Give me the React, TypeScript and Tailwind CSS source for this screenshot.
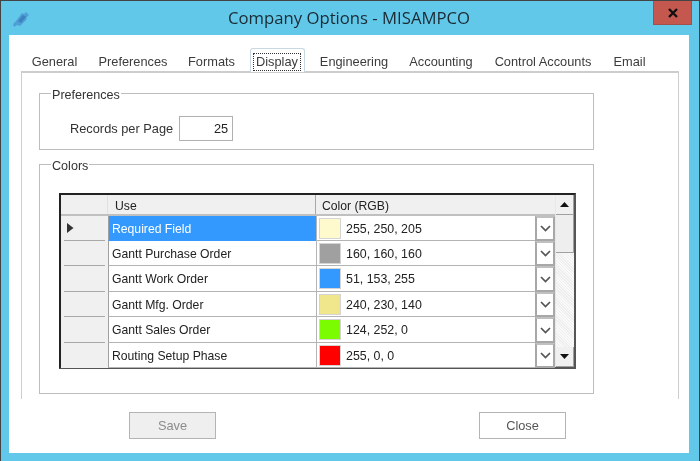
import React from "react";

const rows = [
  { use: "Required Field", rgb: "255, 250, 205", color: "bg-[#fffacd]", h: "h-[25px]" },
  { use: "Gantt Purchase Order", rgb: "160, 160, 160", color: "bg-[#a0a0a0]", h: "h-[25px]" },
  { use: "Gantt Work Order", rgb: "51, 153, 255", color: "bg-[#3399ff]", h: "h-[26px]" },
  { use: "Gantt Mfg. Order", rgb: "240, 230, 140", color: "bg-[#f0e68c]", h: "h-[25px]" },
  { use: "Gantt Sales Order", rgb: "124, 252, 0", color: "bg-[#7cfc00]", h: "h-[26px]" },
  { use: "Routing Setup Phase", rgb: "255, 0, 0", color: "bg-[#ff0000]", h: "h-[25px]" },
];

const tabs = [
  { label: "General", w: "w-[67px]" },
  { label: "Preferences", w: "w-[90px]" },
  { label: "Formats", w: "w-[67px]" },
  { label: "Display", w: "w-[64px]", active: true },
  { label: "Engineering", w: "w-[90px]" },
  { label: "Accounting", w: "w-[84px]" },
  { label: "Control Accounts", w: "w-[120px]" },
  { label: "Email", w: "w-[53px]" },
];

function Chevron() {
  return (
    <svg width="11" height="7" viewBox="0 0 11 7" fill="none">
      <path d="M1 1 L5.5 5.5 L10 1" stroke="#555" strokeWidth="1.7" />
    </svg>
  );
}

export default function App() {
  return (
    <div className="w-[700px] h-[461px] overflow-hidden bg-[#62c8ea] border-t border-x border-[#444] font-['Liberation_Sans',sans-serif] text-[12.8px] text-[#3c3c3c] blur-[0.35px]">
      {/* Title bar */}
      <div className="h-[34px] grid grid-cols-[1fr_auto_1fr]">
        <div className="pl-[11px] pt-[9px]">
          <svg width="18" height="18" viewBox="0 0 18 18" className="blur-[0.6px]">
            <path d="M4 11 L10 3 L12 4 L14 2 L17 5 L14 8 L15 9 L8 16 L5 15 L2 17 L1 14 Z" fill="#4f9fd6" />
            <path d="M6 11 L11 5 L14 7 L9 13 Z" fill="#3b82bf" />
          </svg>
        </div>
        <div className="font-['Open_Sans',sans-serif] text-[16.7px] leading-[34px] text-[#1a2a33] pr-[2px]">
          Company Options - MISAMPCO
        </div>
        <div className="flex justify-end pr-[7px]">
          <div className="w-[39px] h-[25px] -mt-px bg-[#c4574e] border border-[#a2514a] flex items-center justify-center">
            <svg width="12" height="10" viewBox="0 0 12 10">
              <path d="M2 1 L10 9 M10 1 L2 9" stroke="#111" strokeWidth="2.4" />
            </svg>
          </div>
        </div>
      </div>

      {/* Client area */}
      <div className="ml-[8px] w-[680px] h-[418px] bg-white pt-[13px]">
        {/* Tabs */}
        <div className="ml-[12px] h-[23px] flex items-end relative">
          {tabs.map((t) => (
            <div key={t.label} className={`${t.w} flex justify-center`}>
              {t.active ? (
                <div className="w-[55px] h-[24px] -mb-px border border-b-0 border-[#c8d8e0] rounded-t-[3px] bg-white flex items-end justify-center relative z-10">
                  <span className="border border-dotted border-[#333] leading-[16px] px-[2px] mb-px text-[#3c3c3c]">{t.label}</span>
                </div>
              ) : (
                <span className="leading-[18px] whitespace-nowrap">{t.label}</span>
              )}
            </div>
          ))}
        </div>

        {/* Tab panel */}
        <div className="ml-[12px] w-[658px] h-[328px] border-t-2 border-x border-[#cdcdcd] pl-[17px] pt-[12px]">
          <fieldset className="w-[555px] h-[65px] border border-[#bdbdbd] pl-[11px]">
            <legend className="px-[1px] pt-[2px] leading-[14px] text-[12.6px] text-[#333] translate-y-px">Preferences</legend>
            <div className="mt-[15px] ml-[19px] flex items-center gap-[6px]">
              <span className="leading-[24px] text-[#333]">Records per Page</span>
              <div className="w-[54px] h-[25px] border border-[#b0b0b0] text-right pr-[4px] leading-[24px] text-[#222]">25</div>
            </div>
          </fieldset>

          <fieldset className="mt-[6px] w-[555px] h-[238px] border border-[#bdbdbd] pl-[11px]">
            <legend className="px-[1px] pt-[2px] leading-[14px] text-[12.6px] text-[#333] translate-y-px">Colors</legend>
            <div className="mt-[21px] ml-[8px] w-[517px] h-[176px] border-2 border-t-2 border-[#222] border-r-[#555] border-b-[#555] flex text-[12.2px] text-[#222]">
              <div className="w-[496px] flex flex-col">
                {/* Header */}
                <div className="h-[21px] shrink-0 flex bg-[#f0f0f0] border-b-2 border-[#c0c0c0]">
                  <div className="w-[47px] border-r border-[#e0e0e0]" />
                  <div className="w-[208px] pl-[7px] leading-[22px] border-r border-[#a8a8a8]">Use</div>
                  <div className="flex-1 pl-[6px] leading-[22px]">Color (RGB)</div>
                </div>
                {/* Rows */}
                {rows.map((r, i) => (
                  <div key={r.use} className={`${r.h} shrink-0 flex`}>
                    <div className="w-[47px] bg-[#f0f0f0] flex flex-col">
                      <div className="flex-1 flex items-center pl-[6px]">
                        {i === 0 && (
                          <svg width="7" height="10" viewBox="0 0 7 10">
                            <path d="M0 0 L6.5 5 L0 10 Z" fill="#333" />
                          </svg>
                        )}
                      </div>
                      {i < rows.length - 1 && <div className="mx-[3px] h-px bg-[#a8a8a8]" />}
                    </div>
                    <div
                      className={`w-[208px] pl-[3px] pt-[2px] flex items-center border-l border-[#a0a0a0] border-b whitespace-nowrap ${
                        i === 0 ? "bg-[#3399ff] text-white border-b-[#3399ff]" : "bg-white border-b-[#b4b4b4]"
                      }`}
                    >
                      {r.use}
                    </div>
                    <div className="flex-1 flex items-center border-l border-b border-[#b4b4b4] bg-white pl-[2px] text-[12.4px]">
                      <div className={`w-[22px] h-[21px] ${r.color} border border-[#d4d4d4]`} />
                      <span className="ml-[5px] pt-[2px]">{r.rgb}</span>
                    </div>
                    <div className="w-[20px] bg-white border-2 border-[#a8a8a8] border-t-[#c0c0c0] flex items-center justify-center">
                      <Chevron />
                    </div>
                  </div>
                ))}
              </div>
              {/* Scrollbar */}
              <div className="w-[19px] flex flex-col bg-[#f3f3f3] border-l border-[#e8e8e8]">
                <div className="h-[20px] shrink-0 bg-[#f0f0f0] border-b border-r border-[#a0a0a0] flex items-center justify-center">
                  <svg width="9" height="5" viewBox="0 0 9 5">
                    <path d="M0 5 L4.5 0 L9 5 Z" fill="#111" />
                  </svg>
                </div>
                <div className="h-[38px] shrink-0 bg-[#eeeeee] border-b border-r border-[#a0a0a0]" />
                <div className="flex-1 bg-[repeating-linear-gradient(45deg,#fafafa_0px,#fafafa_1px,#eeeeee_1px,#eeeeee_2px)]" />
                <div className="h-[20px] shrink-0 bg-[#f0f0f0] border-b border-r border-[#a0a0a0] flex items-center justify-center">
                  <svg width="9" height="5" viewBox="0 0 9 5">
                    <path d="M0 0 L4.5 5 L9 0 Z" fill="#111" />
                  </svg>
                </div>
              </div>
            </div>
          </fieldset>
        </div>

        {/* Buttons */}
        <div className="mt-[13px] ml-[120px] flex gap-[263px]">
          <div className="w-[87px] h-[27px] bg-[#efefef] border border-[#b4b4b4] text-center leading-[25px] text-[#8c8c8c]">Save</div>
          <div className="w-[87px] h-[27px] bg-white border border-[#b4b4b4] text-center leading-[25px] text-[#555]">Close</div>
        </div>
      </div>
    </div>
  );
}
